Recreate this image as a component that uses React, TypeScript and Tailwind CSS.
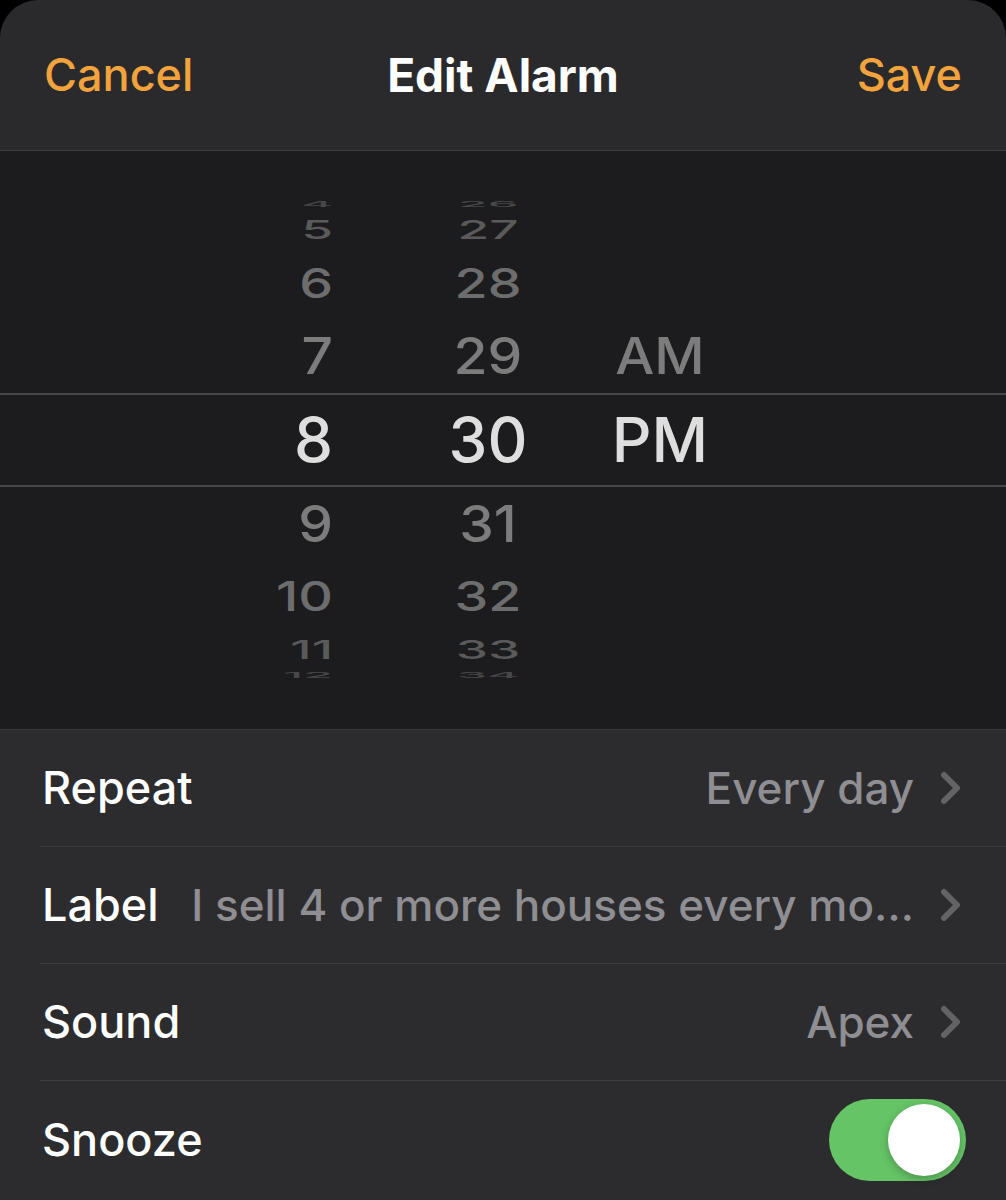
import React from "react";

const FONT = { fontFamily: "Inter, 'Noto Sans', 'Liberation Sans', sans-serif" };

const OFF_COLORS = ["#dedede", "#7c7c7c", "#6d6d6d", "#5a5a5a", "#474747"];

function wheelStyle(k: number): React.CSSProperties {
  if (k === 0) return { color: OFF_COLORS[0] };
  const t = (20.6 * k * Math.PI) / 180;
  const y = 238 * Math.sin(t);
  const c = Math.cos(t);
  const sy = 0.88 * c;
  const sx = 0.9 * (0.85 + 0.15 * c);
  return {
    transform: `translateY(${y.toFixed(1)}px) scale(${sx.toFixed(3)}, ${sy.toFixed(3)})`,
    color: OFF_COLORS[Math.min(Math.abs(k), 4)],
  };
}

type Col = {
  items: { label: string; k: number }[];
  width: string;
  ml: string;
  justify: string;
  origin: string;
};

function WheelColumn({ items, width, ml, justify, origin }: Col) {
  return (
    <div className={`relative h-full ${width} ${ml}`}>
      {items.map((it) => (
        <div
          key={it.label}
          className={`absolute left-0 right-0 top-1/2 -mt-[40px] h-[80px] flex items-center ${justify} ${origin} text-[62px] leading-none font-medium`}
          style={wheelStyle(it.k)}
        >
          {it.label}
        </div>
      ))}
    </div>
  );
}

function Chevron() {
  return (
    <svg width="22" height="34" viewBox="0 0 22 34" className="shrink-0">
      <path d="M4 4 L17 17 L4 30" fill="none" stroke="#636366" strokeWidth="6" strokeLinecap="round" strokeLinejoin="round" />
    </svg>
  );
}

function Row({ label, value, last, children }: { label: string; value?: string; last?: boolean; children?: React.ReactNode }) {
  return (
    <div className="pl-[40px]">
      <div className={`flex h-[117px] items-center pr-[40px] ${last ? "" : "border-b border-[#3d3d40]"}`}>
        <span className="pl-[2px] text-[45px] font-medium text-white shrink-0">{label}</span>
        <div className="flex-1 flex items-center justify-end min-w-0">
          {value !== undefined && (
            <>
              <span className="text-[44px] font-medium text-[#8e8e93] whitespace-nowrap truncate">{value}</span>
              <span className="ml-[26px] mr-[4px] flex items-center"><Chevron /></span>
            </>
          )}
          {children}
        </div>
      </div>
    </div>
  );
}

export default function App() {
  const hours = [4, 5, 6, 7, 8, 9, 10, 11, 12].map((h, i) => ({ label: String(h), k: i - 4 }));
  const mins = [26, 27, 28, 29, 30, 31, 32, 33, 34].map((m, i) => ({ label: String(m), k: i - 4 }));
  const ampm = [
    { label: "AM", k: -1 },
    { label: "PM", k: 0 },
  ];
  return (
    <div className="w-[1006px] h-[1200px] bg-black overflow-hidden" style={FONT}>
      <div className="h-[151px] rounded-t-[38px] bg-[#2a2a2c] border-b border-[#3d3d3f] grid grid-cols-[1fr_auto_1fr] items-center px-[44px]">
        <span className="justify-self-start text-[45px] font-medium text-[#f3a33c]">Cancel</span>
        <span className="text-[46px] font-bold text-white">Edit Alarm</span>
        <span className="justify-self-end text-[45px] font-medium text-[#f3a33c]">Save</span>
      </div>
      <div className="relative h-[578px] bg-[#1c1c1e] overflow-hidden">
        <div className="absolute left-0 right-0 top-[242px] h-[94px] border-y-2 border-[#48484a]" />
        <div className="flex h-full">
          <WheelColumn items={hours} width="w-[110px]" ml="ml-[223px]" justify="justify-end" origin="origin-right" />
          <WheelColumn items={mins} width="w-[110px]" ml="ml-[100px]" justify="justify-center" origin="origin-center" />
          <WheelColumn items={ampm} width="w-[120px]" ml="ml-[57px]" justify="justify-center" origin="origin-center" />
        </div>
      </div>
      <div className="bg-[#2c2c2e] border-t border-[#3a3a3c] h-[471px]">
        <Row label="Repeat" value="Every day" />
        <Row label="Label" value="I sell 4 or more houses every mo…" />
        <Row label="Sound" value="Apex" />
        <Row label="Snooze" last>
          <div className="w-[137px] h-[82px] rounded-full bg-[#65c466] flex items-center justify-end pr-[6px]">
            <div className="w-[72px] h-[72px] rounded-full bg-white shadow-[0_3px_8px_rgba(0,0,0,0.25)]" />
          </div>
        </Row>
      </div>
    </div>
  );
}
